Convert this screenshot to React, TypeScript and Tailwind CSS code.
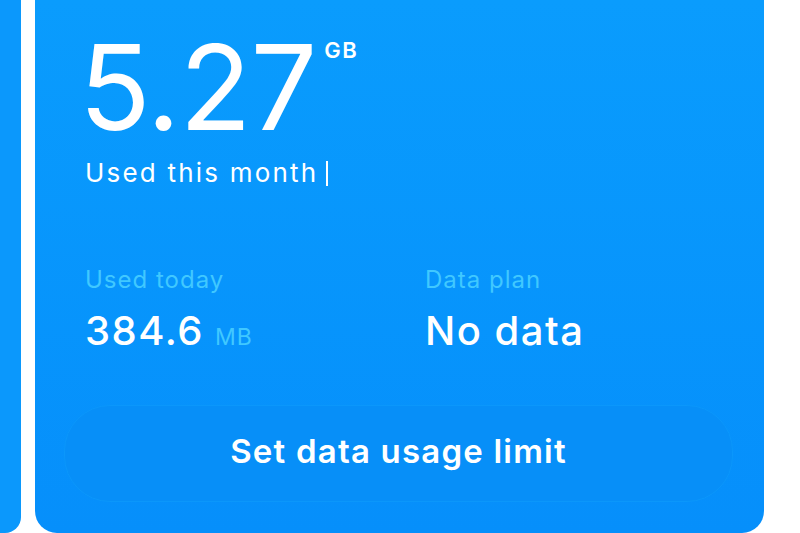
const font = { fontFamily: 'Inter, "Noto Sans", sans-serif' };

function Stat({ label, value, unit }: { label: string; value: string; unit?: string }) {
  return (
    <div className="flex flex-col">
      <span className="text-[24px] leading-none tracking-[1px] text-[#40c8ff]">{label}</span>
      <div className="mt-[19px] flex items-baseline gap-[11px]">
        <span className="text-[40px] font-medium leading-none tracking-[1.5px] text-white">{value}</span>
        {unit && <span className="text-[23px] leading-none tracking-[1px] text-[#40c8ff]">{unit}</span>}
      </div>
    </div>
  );
}

export default function App() {
  return (
    <div className="flex h-[533px] w-[800px] overflow-hidden bg-white" style={font}>
      {/* previous card peeking in */}
      <div className="h-full w-[21px] shrink-0 rounded-br-[16px] bg-[#0b98fc]" />

      {/* main usage card */}
      <div className="ml-[14px] flex h-full w-[729px] shrink-0 flex-col rounded-b-[22px] bg-gradient-to-b from-[#0a9cfd] to-[#068ffb] pl-[50px] pr-[31px]">
        <div className="mt-[28px] flex items-start">
          <span className="-ml-[6px] text-[118px] font-normal leading-none tracking-[-1px] text-white">5.27</span>
          <span className="ml-[8px] mt-[11px] text-[22px] font-semibold leading-none tracking-[1.5px] text-white">GB</span>
        </div>
        <div className="mt-[14px] flex items-center text-[26px] leading-none tracking-[2.2px] text-white">
          <span>Used this month</span>
          <span className="ml-[8px] inline-block h-[25px] w-[2px] bg-white" />
        </div>

        <div className="mt-[82px] grid grid-cols-[340px_1fr]">
          <Stat label="Used today" value="384.6" unit="MB" />
          <Stat label="Data plan" value="No data" />
        </div>

        <button className="-ml-[21px] mt-[54px] flex h-[97px] w-[669px] items-center justify-center rounded-[46px] border border-[#0b97fb] bg-[#078ff8] pb-[4px] text-[33px] font-semibold tracking-[1.2px] text-white">
          Set data usage limit
        </button>
      </div>
    </div>
  );
}
